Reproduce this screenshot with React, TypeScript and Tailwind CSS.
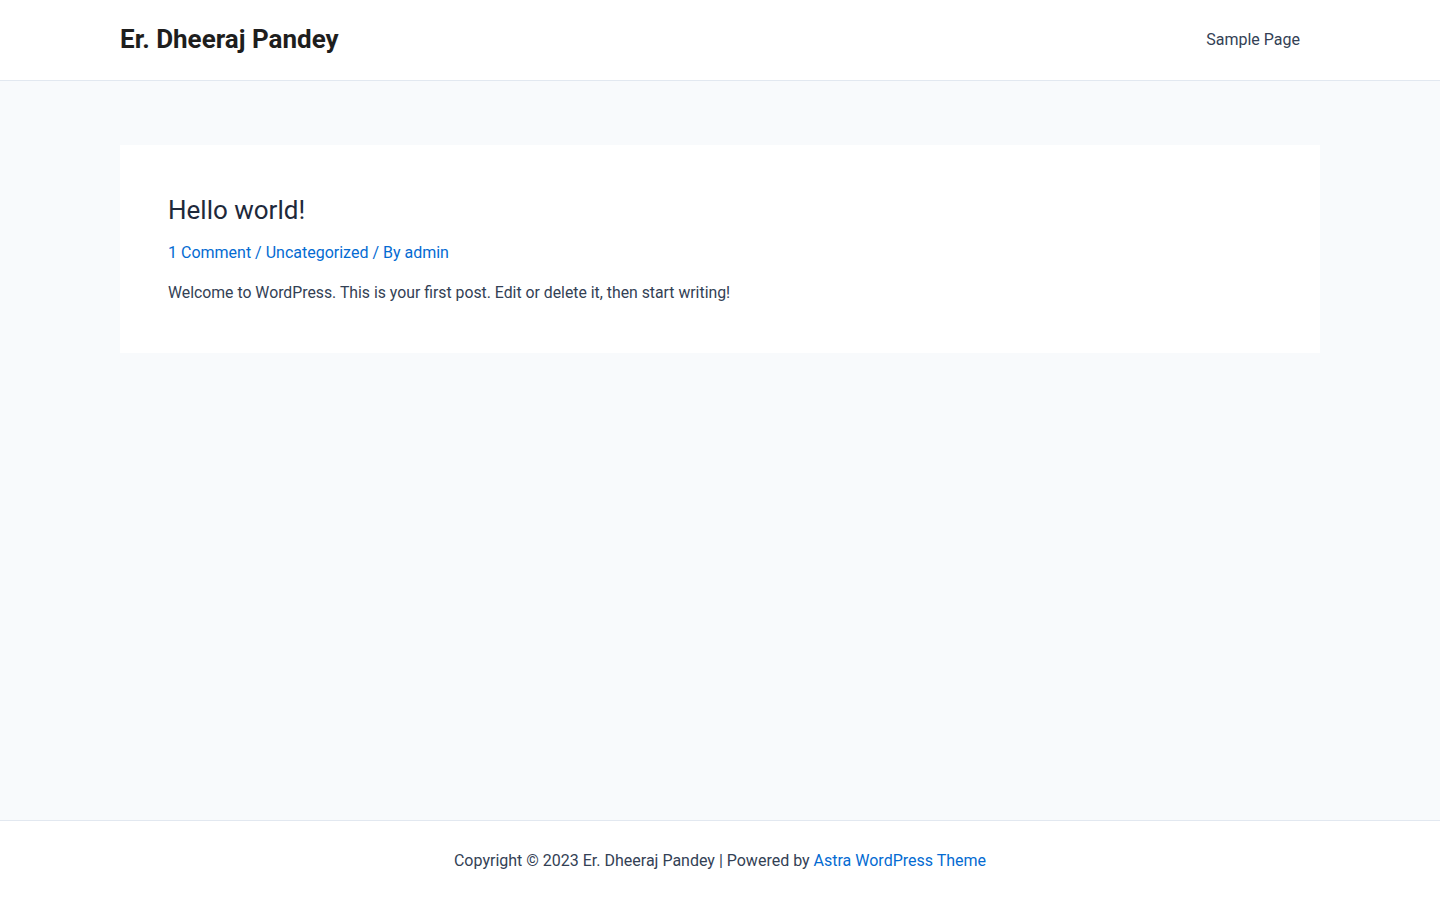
export default function App() {
  return (
    <div className="flex min-h-screen flex-col bg-[#f8fafc] font-['Roboto',sans-serif] text-[#334155]">
      <header className="h-[81px] border-b border-[#e2e8f0] bg-white">
        <div className="mx-auto flex h-20 w-[1200px] items-center justify-between">
          <a href="#" className="-mt-0.5 text-[26px] font-bold leading-none text-[#1e1e1e]">
            Er. Dheeraj Pandey
          </a>
          <nav className="flex h-full items-center">
            <a href="#" className="px-5 text-base text-[#334155]">
              Sample Page
            </a>
          </nav>
        </div>
      </header>

      <main className="flex-1 pt-16">
        <div className="mx-auto w-[1200px]">
          <article className="bg-white px-12 pb-[48px] pt-[50px]">
            <h2 className="text-[26px] leading-[30px] text-[#1e293b]">Hello world!</h2>
            <div className="mt-[16px] text-base leading-[24px] text-[#046bd2]">
              <a href="#">1 Comment</a> / <a href="#">Uncategorized</a> / By{" "}
              <a href="#">admin</a>
            </div>
            <p className="mt-4 text-[15.8px] leading-[24px]">
              Welcome to WordPress. This is your first post. Edit or delete it, then start writing!
            </p>
          </article>
        </div>
      </main>

      <footer className="h-[80px] border-t border-[#e2e8f0] bg-white">
        <div className="flex h-full items-center justify-center text-base">
          <span>
            Copyright © 2023 Er. Dheeraj Pandey | Powered by{" "}
            <a href="#" className="text-[#046bd2]">
              Astra WordPress Theme
            </a>
          </span>
        </div>
      </footer>
    </div>
  );
}
